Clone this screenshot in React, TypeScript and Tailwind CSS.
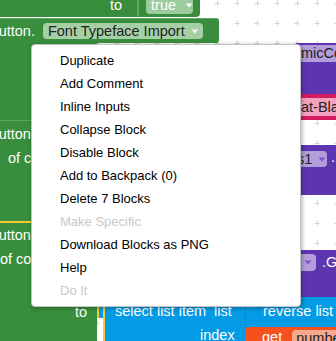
import React from "react";

const menuItems = [
  { label: "Duplicate" },
  { label: "Add Comment" },
  { label: "Inline Inputs" },
  { label: "Collapse Block" },
  { label: "Disable Block" },
  { label: "Add to Backpack (0)" },
  { label: "Delete 7 Blocks" },
  { label: "Make Specific", disabled: true },
  { label: "Download Blocks as PNG" },
  { label: "Help" },
  { label: "Do It", disabled: true },
];

const Arrow = ({ color }: { color: string }) => (
  <svg width="8" height="5" viewBox="0 0 8 5" className="shrink-0">
    <path d="M0.5 0.5 L7.5 0.5 L4 4.5 Z" fill={color} />
  </svg>
);

const GridBg = () => (
  <svg className="absolute inset-0" width="336" height="341">
    <defs>
      <pattern id="grid" x="7" y="-7" width="20" height="20" patternUnits="userSpaceOnUse">
        <path d="M7.5 10.5 H12.5 M10.5 7.5 V12.5" stroke="#d4d4d4" strokeWidth="1" />
      </pattern>
    </defs>
    <rect width="336" height="341" fill="url(#grid)" />
  </svg>
);

export default function App() {
  return (
    <div className="relative w-[336px] h-[341px] overflow-hidden whitespace-nowrap bg-white font-['Liberation_Sans',Arial,sans-serif] text-[14.5px] leading-[17px]">
      <GridBg />

      {/* set ... to true */}
      <div className="absolute left-0 top-[-6px] w-[200px] h-[23px] bg-[#388e3c] rounded-br-[4px] flex items-center pl-[110px]">
        <span className="text-white">to</span>
        <div className="ml-[15px] self-stretch w-[8px] border-l-2 border-[#5ea862] rounded-bl-[3px]" />
        <div className="ml-px h-[16px] w-[47px] rounded-[4px] bg-[#9ccb9d] flex items-center pl-[5px] gap-[9px]">
          <span className="text-white">true</span>
          <Arrow color="#ffffff" />
        </div>
      </div>

      {/* set Button. Font Typeface Import */}
      <div className="absolute left-0 top-[18px] w-[219px] h-[25px] bg-[#388e3c] border-t border-[#5ea862] rounded-r-[3px] flex items-center">
        <span className="ml-[-11px] text-white">Button.</span>
        <div className="ml-[8px] h-[16px] w-[160px] rounded-[4px] bg-[#a5d0a6] flex items-center pl-[5px] gap-[6px]">
          <span className="text-[#222]">Font Typeface Import</span>
          <Arrow color="#f2f2f2" />
        </div>
      </div>
      <div className="absolute left-0 top-[43px] w-[97px] h-[298px] bg-[#388e3c] flex flex-col pt-[77px] text-white">
        <div className="h-px bg-[#5ea862]" />
        <span className="mt-[5px] ml-[-11px]">Button</span>
        <span className="mt-[7px] ml-[8px]">of c</span>
        <div className="mt-[54px] h-[2px] bg-[#f9c834]" />
        <span className="mt-[4px] ml-[-11px]">Button</span>
        <span className="mt-[7px]">of co</span>
        <span className="mt-[36px] ml-[75px]">to</span>
      </div>

      {/* purple component blocks on the right */}
      <div className="absolute left-[296px] top-[43px] w-[44px] h-[51px] bg-[#5e35b1] pt-[2px]">
        <div className="h-[17px] rounded-l-[4px] bg-[#b39ddb] flex items-center pl-[5px]">
          <span className="text-[#222]">micCoat</span>
        </div>
      </div>
      <div className="absolute left-[296px] top-[94px] w-[44px] h-[26px] bg-[#d81b60] pt-[4px]">
        <div className="h-[18px] bg-[#f4a3bf] flex items-center pl-[5px]">
          <span className="text-[#222]">at-Black</span>
        </div>
      </div>
      <div className="absolute left-[296px] top-[145px] w-[44px] h-[50px] bg-[#5e35b1] flex items-start pt-[6px] gap-[4px]">
        <div className="h-[16px] w-[31px] rounded-r-[4px] bg-[#b39ddb] flex items-center pl-px gap-[6px]">
          <span className="text-[#222]">s1</span>
          <Arrow color="#7e57c2" />
        </div>
        <span className="text-white -mt-[2px]">.</span>
      </div>
      <div className="absolute left-[296px] top-[250px] w-[44px] h-[48px] bg-[#5e35b1] flex items-start pt-[4px] gap-[6px]">
        <div className="h-[17px] w-[20px] rounded-r-[4px] bg-[#b39ddb] flex items-center pl-[8px]">
          <Arrow color="#7e57c2" />
        </div>
        <span className="text-white">.G</span>
      </div>

      {/* select list item */}
      <div className="absolute left-[97px] top-[300px] w-[10px] h-[18px] bg-[#039be5] border-l-2 border-[#f9c834] rounded-tl-[6px]" />
      <div className="absolute left-[103px] top-[297px] w-[240px] h-[44px] bg-[#039be5] border-l-2 border-[#f9c834] flex flex-col pt-[6px] text-white">
        <span className="ml-[10px]">select list item&nbsp; list</span>
        <span className="ml-[95px] mt-[7px]">index</span>
      </div>
      <div className="absolute left-[245px] top-[298px] w-[96px] h-[27px] bg-[#039be5] border-l border-[#0a86c8] rounded-tl-[4px] pt-[5px] pl-[17px]">
        <span className="text-white">reverse list</span>
      </div>
      <div className="absolute left-[245px] top-[327px] w-[96px] h-[20px] bg-[#f4511e] rounded-tl-[4px] flex items-start pt-[2px] pl-[17px] gap-[10px]">
        <span className="text-white">get</span>
        <div className="mt-px h-[17px] w-[60px] rounded-[4px] bg-[#f9a88b] flex items-center pl-[4px]">
          <span className="text-[#222]">number</span>
        </div>
      </div>

      {/* context menu */}
      <div className="absolute left-[31px] top-[44px] w-[270px] py-[4px] bg-white border border-[#c4c4c4] rounded-[4px] shadow-[1px_1px_4px_rgba(0,0,0,0.35)]">
        {menuItems.map((item) => (
          <div
            key={item.label}
            className={`h-[23px] pl-[28px] text-[13px] leading-[23px] ${item.disabled ? "text-[#c8c8c8]" : "text-black"}`}
          >
            {item.label}
          </div>
        ))}
      </div>
    </div>
  );
}
